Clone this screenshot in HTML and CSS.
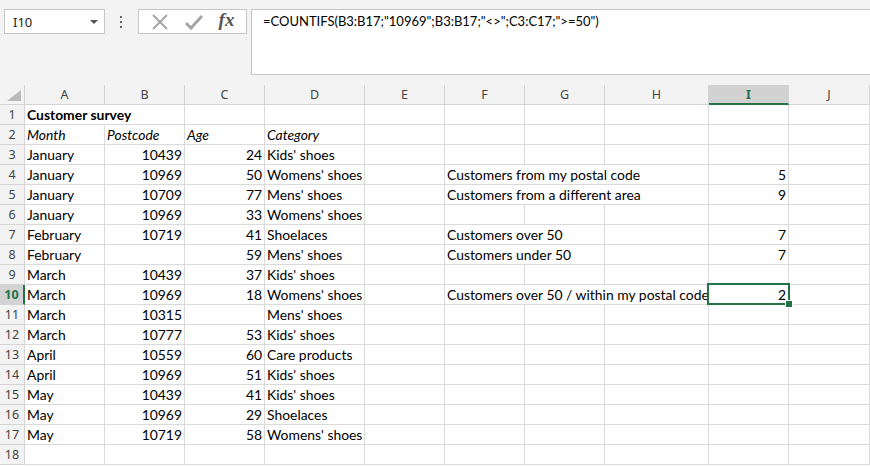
FILE: index.html
```html
<!DOCTYPE html>
<html lang="en">
<head>
    <meta charset="UTF-8">
    <title>Customer survey</title>
    <link rel="stylesheet" href="styles.css">
</head>
<body>
    <!-- Name box + formula bar -->
    <div class="toolbar">
        <div class="namebox">
            <span>I10</span>
            <svg class="caret" width="8" height="4" viewBox="0 0 8 4"><path d="M0 0H8L4 4Z" fill="#555"/></svg>
        </div>
        <svg class="grip" width="3" height="12" viewBox="0 0 3 12">
            <rect x="0" y="0" width="2" height="2" fill="#666"/>
            <rect x="0" y="5" width="2" height="2" fill="#666"/>
            <rect x="0" y="10" width="2" height="2" fill="#666"/>
        </svg>
        <div class="fx-buttons">
            <svg width="18" height="18" viewBox="0 0 18 18"><path d="M2 2L16 16M16 2L2 16" stroke="#a6a6a6" stroke-width="2" fill="none"/></svg>
            <svg width="20" height="18" viewBox="0 0 20 18"><path d="M2 10L7 15L18 3" stroke="#a6a6a6" stroke-width="3" fill="none"/></svg>
            <span class="fx">fx</span>
        </div>
        <div class="formula">=COUNTIFS(B3:B17;"10969";B3:B17;"&lt;&gt;";C3:C17;"&gt;=50")</div>
    </div>

    <!-- Sheet -->
    <div class="sheet">
        <div class="row head">
            <div class="corner"><svg width="14" height="11" viewBox="0 0 14 11"><path d="M14 0V11H0Z" fill="#b9b9b9"/></svg></div>
            <div>A</div><div>B</div><div>C</div><div>D</div><div>E</div>
            <div>F</div><div>G</div><div>H</div><div class="sel">I</div><div>J</div>
        </div>

        <div class="row">
            <div class="num">1</div>
            <div class="bold span2">Customer survey</div><div></div><div></div><div></div><div></div><div></div><div></div><div></div><div></div>
        </div>
        <div class="row">
            <div class="num">2</div>
            <div class="ital">Month</div><div class="ital">Postcode</div><div class="ital">Age</div><div class="ital">Category</div>
            <div></div><div></div><div></div><div></div><div></div><div></div>
        </div>
        <div class="row">
            <div class="num">3</div>
            <div>January</div><div class="r">10439</div><div class="r">24</div><div>Kids' shoes</div>
            <div></div><div></div><div></div><div></div><div></div><div></div>
        </div>
        <div class="row">
            <div class="num">4</div>
            <div>January</div><div class="r">10969</div><div class="r">50</div><div>Womens' shoes</div>
            <div></div><div class="span3">Customers from my postal code</div><div class="r">5</div><div></div>
        </div>
        <div class="row">
            <div class="num">5</div>
            <div>January</div><div class="r">10709</div><div class="r">77</div><div>Mens' shoes</div>
            <div></div><div class="span3">Customers from a different area</div><div class="r">9</div><div></div>
        </div>
        <div class="row">
            <div class="num">6</div>
            <div>January</div><div class="r">10969</div><div class="r">33</div><div>Womens' shoes</div>
            <div></div><div></div><div></div><div></div><div></div><div></div>
        </div>
        <div class="row">
            <div class="num">7</div>
            <div>February</div><div class="r">10719</div><div class="r">41</div><div>Shoelaces</div>
            <div></div><div class="span2">Customers over 50</div><div></div><div class="r">7</div><div></div>
        </div>
        <div class="row">
            <div class="num">8</div>
            <div>February</div><div></div><div class="r">59</div><div>Mens' shoes</div>
            <div></div><div class="span2">Customers under 50</div><div></div><div class="r">7</div><div></div>
        </div>
        <div class="row">
            <div class="num">9</div>
            <div>March</div><div class="r">10439</div><div class="r">37</div><div>Kids' shoes</div>
            <div></div><div></div><div></div><div></div><div></div><div></div>
        </div>
        <div class="row">
            <div class="num sel">10</div>
            <div>March</div><div class="r">10969</div><div class="r">18</div><div>Womens' shoes</div>
            <div></div><div class="span3">Customers over 50 / within my postal code</div><div class="r active">2</div><div></div>
        </div>
        <div class="row">
            <div class="num">11</div>
            <div>March</div><div class="r">10315</div><div></div><div>Mens' shoes</div>
            <div></div><div></div><div></div><div></div><div></div><div></div>
        </div>
        <div class="row">
            <div class="num">12</div>
            <div>March</div><div class="r">10777</div><div class="r">53</div><div>Kids' shoes</div>
            <div></div><div></div><div></div><div></div><div></div><div></div>
        </div>
        <div class="row">
            <div class="num">13</div>
            <div>April</div><div class="r">10559</div><div class="r">60</div><div>Care products</div>
            <div></div><div></div><div></div><div></div><div></div><div></div>
        </div>
        <div class="row">
            <div class="num">14</div>
            <div>April</div><div class="r">10969</div><div class="r">51</div><div>Kids' shoes</div>
            <div></div><div></div><div></div><div></div><div></div><div></div>
        </div>
        <div class="row">
            <div class="num">15</div>
            <div>May</div><div class="r">10439</div><div class="r">41</div><div>Kids' shoes</div>
            <div></div><div></div><div></div><div></div><div></div><div></div>
        </div>
        <div class="row">
            <div class="num">16</div>
            <div>May</div><div class="r">10969</div><div class="r">29</div><div>Shoelaces</div>
            <div></div><div></div><div></div><div></div><div></div><div></div>
        </div>
        <div class="row">
            <div class="num">17</div>
            <div>May</div><div class="r">10719</div><div class="r">58</div><div>Womens' shoes</div>
            <div></div><div></div><div></div><div></div><div></div><div></div>
        </div>
        <div class="row">
            <div class="num">18</div>
            <div></div><div></div><div></div><div></div><div></div><div></div><div></div><div></div><div></div><div></div>
        </div>
    </div>
</body>
</html>
```

FILE: styles.css
```css
* {
    box-sizing: border-box;
}

body {
    margin: 0;
    width: 870px;
    height: 466px;
    overflow: hidden;
    background-color: #ffffff;
    font-family: 'Lato', sans-serif;
}

/* Barra de formulas */
.toolbar {
    display: flex;
    align-items: flex-start;
    height: 85px;
    padding-top: 9px;
    background-color: #f3f3f3;
}

.namebox {
    display: flex;
    align-items: center;
    justify-content: space-between;
    width: 101px;
    height: 25px;
    margin-left: 4px;
    padding: 0 6px 0 8px;
    background-color: #fff;
    border: 1px solid #c6c6c6;
    font-family: 'Noto Sans', sans-serif;
    font-size: 13px;
    color: #222;
}

.grip {
    margin: 7px 0 0 15px;
}

.fx-buttons {
    display: flex;
    align-items: center;
    justify-content: space-around;
    width: 109px;
    height: 25px;
    margin-left: 15px;
    padding: 0 4px;
    background-color: #fff;
    border: 1px solid #c6c6c6;
}

.fx {
    font-family: 'Liberation Serif', serif;
    font-style: italic;
    font-weight: bold;
    font-size: 19px;
    color: #555;
    margin-top: -3px;
}

.formula {
    flex: 1;
    height: 66px;
    margin-left: 4px;
    padding: 3px 0 0 11px;
    background-color: #fff;
    border: 1px solid #c6c6c6;
    border-right: none;
    font-size: 13px;
    color: #000;
}

/* Hoja */
.row {
    display: grid;
    grid-template-columns: 25px 80px 80px 80px 100px 80px 80px 80px 104px 80px 81px;
    height: 20px;
}

.row > div {
    height: 20px;
    padding: 0 2px;
    border-right: 1px solid #dadada;
    border-bottom: 1px solid #dadada;
    font-size: 13.9px;
    line-height: 20px;
    color: #000;
    white-space: nowrap;
}

.head > div {
    background-color: #f3f3f3;
    border-color: #d4d4d4;
    text-align: center;
    font-family: 'Noto Sans', sans-serif;
    font-size: 12.5px;
    line-height: 19px;
    color: #444;
}

.head > div.corner {
    display: flex;
    align-items: flex-end;
    justify-content: flex-end;
    padding: 0 3px 3px 0;
}

.head > div.sel {
    background-color: #d2d2d2;
    border-bottom: 2px solid #217346;
    color: #217346;
    font-weight: bold;
}

.row > .num {
    background-color: #f3f3f3;
    border-color: #d4d4d4;
    text-align: center;
    font-family: 'Noto Sans', sans-serif;
    font-size: 12.5px;
    color: #444;
    padding: 0;
}

.row > .num.sel {
    background-color: #d2d2d2;
    border-right: 2px solid #217346;
    color: #217346;
    font-weight: bold;
}

.r {
    text-align: right;
}

.bold {
    font-weight: bold;
}

.ital {
    font-style: italic;
}

.span2 {
    grid-column: span 2;
}

.span3 {
    grid-column: span 3;
}

/* Celda activa */
.row > .active {
    position: relative;
}

.active::after {
    content: '';
    position: absolute;
    top: -2px;
    left: -2px;
    right: -2px;
    bottom: -1px;
    border: 2px solid #217346;
}

.active::before {
    content: '';
    position: absolute;
    right: -5px;
    bottom: -4px;
    width: 6px;
    height: 6px;
    background-color: #217346;
    border: 1px solid #fff;
    z-index: 1;
}
```
